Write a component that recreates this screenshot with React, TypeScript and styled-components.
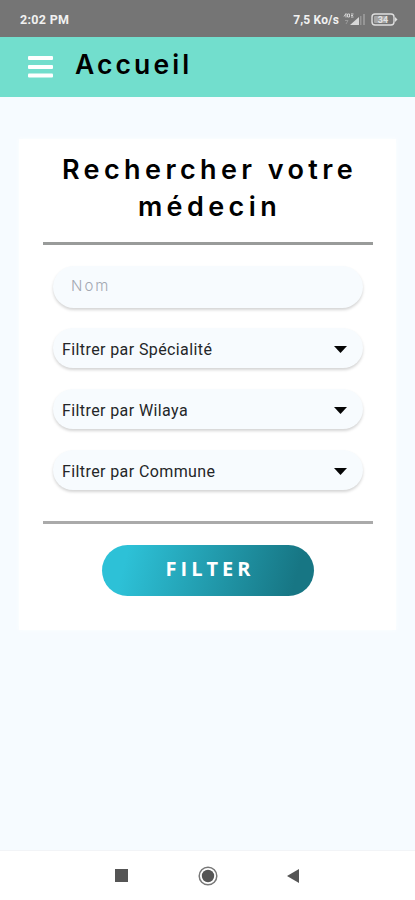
import React from 'react';
import styled, { createGlobalStyle } from 'styled-components';

const GlobalStyle = createGlobalStyle`
  * { box-sizing: border-box; }
  body { margin: 0; background: #f6fbff; }
`;

const Screen = styled.div`
  display: flex;
  flex-direction: column;
  width: 415px;
  height: 900px;
  overflow: hidden;
  background: #f6fbff;
  font-family: Roboto, sans-serif;
`;

const StatusBar = styled.div`
  display: flex;
  align-items: center;
  flex: none;
  height: 37px;
  padding: 2px 16px 0 20px;
  background: #757575;
  color: #f1f1f1;
  font-size: 12px;
  font-weight: 700;
`;

const Clock = styled.span`
  flex: 1;
  font-size: 12.5px;
  letter-spacing: 0.3px;
`;

const NetSpeed = styled.span`
  margin-right: 4px;
  letter-spacing: 0.15px;
`;

const AppBar = styled.header`
  display: flex;
  flex: none;
  height: 60px;
  padding: 18px 0 0 28px;
  background: #72decd;
`;

const PageTitle = styled.h1`
  margin: -7px 0 0 22px;
  font: 600 26.5px/32px Inter, sans-serif;
  letter-spacing: 3.1px;
`;

const Content = styled.main`
  flex: 1;
  padding: 42px 19px 0;
`;

const Card = styled.section`
  display: flex;
  flex-direction: column;
  height: 491px;
  padding: 12px 23px 0 24px;
  background: #fff;
  box-shadow: 0 0 5px #fcfeff;
`;

const Heading = styled.h2`
  margin: 0 0 17px;
  padding-left: 3px;
  text-align: center;
  white-space: nowrap;
  font: 600 27px/37px Inter, sans-serif;
  letter-spacing: 4.4px;
`;

const Divider = styled.div<{ $tone: string }>`
  flex: none;
  height: 3px;
  background: ${(p) => p.$tone};
`;

const Fields = styled.div`
  display: flex;
  flex-direction: column;
  gap: 21px;
  padding: 21px 10px 31px;
`;

const pill = `
  width: 310px;
  border: 0;
  border-radius: 21px;
  background: #f7fbfe;
  box-shadow: 0 2px 3px rgba(0, 0, 0, 0.17);
`;

const NameInput = styled.input`
  ${pill}
  height: 42px;
  margin-bottom: -1px;
  padding: 0 18px 3px;
  outline: 0;
  font: 300 15px Inter, sans-serif;
  letter-spacing: 2px;
  &::placeholder { color: #a3a8b2; opacity: 1; }
`;

const SelectField = styled.button`
  ${pill}
  display: flex;
  align-items: center;
  justify-content: space-between;
  height: 40px;
  padding: 3px 16px 0 9px;
  color: #242628;
  font: 400 16px Roboto, sans-serif;
  letter-spacing: 0.4px;
`;

const FilterButton = styled.button`
  width: 212px;
  height: 51px;
  margin: 21px 0 0 59px;
  padding: 0 0 4px 4px;
  border: 0;
  border-radius: 26px;
  background: linear-gradient(105deg, #2dc1d7 12%, #177684 90%);
  color: #fff;
  font: 700 20px "Open Sans", sans-serif;
  letter-spacing: 4px;
`;

const NavBar = styled.nav`
  display: flex;
  align-items: center;
  flex: none;
  height: 50px;
  padding: 0 115px;
  border-top: 1px solid #f2f4f7;
  justify-content: space-between;
  background: #fff;
`;

const filters = ['Filtrer par Spécialité', 'Filtrer par Wilaya', 'Filtrer par Commune'];

function StatusIcons() {
  return (
    <svg width="56" height="16" viewBox="0 0 56 16" fill="none">
      <path d="M1 4.5L3 1.5V5.5M4.5 2H6.5V5H4.5ZM8 2H10.5M8 3.5H10M8 5H10.5" stroke="#dedede" strokeWidth="0.9" />
      <path d="M2 8.5H5L3 12" stroke="#999" />
      <path d="M7 13L16 5V13Z" fill="#d8d8d8" />
      <path d="M17 13V4H18.5V13ZM20 13V2H22V13Z" fill="#969696" />
      <rect x="29" y="2" width="22" height="11" rx="3" stroke="#dedede" strokeWidth="1.4" />
      <path d="M52 5L54.5 7.5L52 10Z" fill="#dedede" />
      <rect x="31" y="4" width="12" height="7" rx="1" fill="#a5a5a5" />
      <text x="40" y="11" textAnchor="middle" fill="#e2e2e2" fontFamily="Roboto" fontSize="9" fontWeight="700">34</text>
    </svg>
  );
}

export default function App() {
  return (
    <>
      <GlobalStyle />
      <Screen>
        <StatusBar>
          <Clock>2:02 PM</Clock>
          <NetSpeed>7,5 Ko/s</NetSpeed>
          <StatusIcons />
        </StatusBar>
        <AppBar>
          <svg width="25" height="24" viewBox="0 0 25 24" fill="#fff">
            <rect y="1" width="25" height="4" rx="1" />
            <rect y="10" width="25" height="4" rx="1" />
            <rect y="18.5" width="25" height="4" rx="1" />
          </svg>
          <PageTitle>Accueil</PageTitle>
        </AppBar>
        <Content>
          <Card>
            <Heading>Rechercher votre<br />médecin</Heading>
            <Divider $tone="#999b9a" />
            <Fields>
              <NameInput placeholder="Nom" aria-label="Nom" />
              {filters.map((label) => (
                <SelectField key={label} type="button">
                  {label}
                  <svg width="13" height="7" viewBox="0 0 13 7"><path d="M0 0H13L6.5 7Z" fill="#050505" /></svg>
                </SelectField>
              ))}
            </Fields>
            <Divider $tone="#aaa" />
            <FilterButton type="button">FILTER</FilterButton>
          </Card>
        </Content>
        <NavBar>
          <svg width="13" height="13"><rect width="13" height="13" fill="#555" /></svg>
          <svg width="20" height="20" viewBox="0 0 20 20">
            <circle cx="10" cy="10" r="8.8" fill="none" stroke="#777" strokeWidth="1.5" />
            <circle cx="10" cy="10" r="6.2" fill="#555" />
          </svg>
          <svg width="13" height="14"><path d="M0 7L12 0V14Z" fill="#555" /></svg>
        </NavBar>
      </Screen>
    </>
  );
}
